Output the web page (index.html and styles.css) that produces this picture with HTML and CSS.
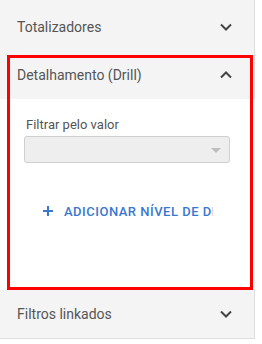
FILE: index.html
```html
<!DOCTYPE html>
<html>
<head>
<meta charset="utf-8">
<link rel="stylesheet" href="styles.css">
</head>
<body>
<div class="accordion">
  <div class="header first">
    <span class="title">Totalizadores</span>
    <svg class="chev" width="12" height="8" viewBox="0 0 12 8"><path d="M1 1.5 L6 6.5 L11 1.5" fill="none" stroke="#444" stroke-width="2"/></svg>
  </div>
  <div class="header">
    <span class="title">Detalhamento (Drill)</span>
    <svg class="chev" width="12" height="8" viewBox="0 0 12 8"><path d="M1 6.5 L6 1.5 L11 6.5" fill="none" stroke="#444" stroke-width="2"/></svg>
  </div>
  <div class="content">
    <label class="label">Filtrar pelo valor</label>
    <div class="select"><span class="arrow"></span></div>
    <div class="add">
      <svg class="plus" width="10" height="10" viewBox="0 0 10 10"><path d="M5 0 V10 M0 5 H10" stroke="#3a78d0" stroke-width="2"/></svg>
      <span class="add-text">ADICIONAR NÍVEL DE DRILL</span>
    </div>
  </div>
  <div class="header last">
    <span class="title">Filtros linkados</span>
    <svg class="chev" width="12" height="8" viewBox="0 0 12 8"><path d="M1 1.5 L6 6.5 L11 1.5" fill="none" stroke="#444" stroke-width="2"/></svg>
  </div>
  <div class="highlight"></div>
</div>
</body>
</html>
```
FILE: styles.css
```css
html, body {
  margin: 0;
  padding: 0;
  background: #fff;
  font-family: Roboto, "Liberation Sans", Arial, sans-serif;
}
.accordion {
  position: relative;
  width: 262px;
}
.header {
  box-sizing: border-box;
  width: 255px;
  height: 48px;
  background: #f4f4f4;
  border-right: 1px solid #dedede;
  display: flex;
  align-items: center;
  justify-content: space-between;
  padding: 0 22px 0 17px;
}
.header.first {
  height: 51px;
  padding-top: 3px;
}
.header.last {
  height: 49px;
  border-bottom: 1px solid #dedede;
}
.title {
  font-size: 14px;
  color: #555;
}
.chev {
  display: block;
}
.content {
  height: 191px;
  box-sizing: border-box;
  padding: 18px 24px 0 24px;
  width: 254px;
}
.label {
  display: block;
  font-size: 13px;
  line-height: 16px;
  color: #555;
  padding-left: 2px;
}
.select {
  margin-top: 3px;
  box-sizing: border-box;
  height: 27px;
  width: 206px;
  background: #eeeeee;
  border: 1px solid #cfcfcf;
  border-radius: 3px;
  position: relative;
}
.arrow {
  position: absolute;
  right: 8px;
  top: 11px;
  width: 0;
  height: 0;
  border-left: 5px solid transparent;
  border-right: 5px solid transparent;
  border-top: 5px solid #bdbdbd;
}
.add {
  margin: 30px 0 0 19px;
  width: 170px;
  height: 36px;
  display: flex;
  align-items: center;
  overflow: hidden;
  white-space: nowrap;
}
.plus {
  flex: none;
  display: block;
}
.add-text {
  margin-left: 11px;
  font-size: 13px;
  font-weight: 500;
  letter-spacing: 0.5px;
  color: #3a78d0;
}
.highlight {
  position: absolute;
  left: 7px;
  top: 55px;
  width: 246px;
  height: 235px;
  box-sizing: border-box;
  border: 3px solid #ff0000;
  pointer-events: none;
}
```
